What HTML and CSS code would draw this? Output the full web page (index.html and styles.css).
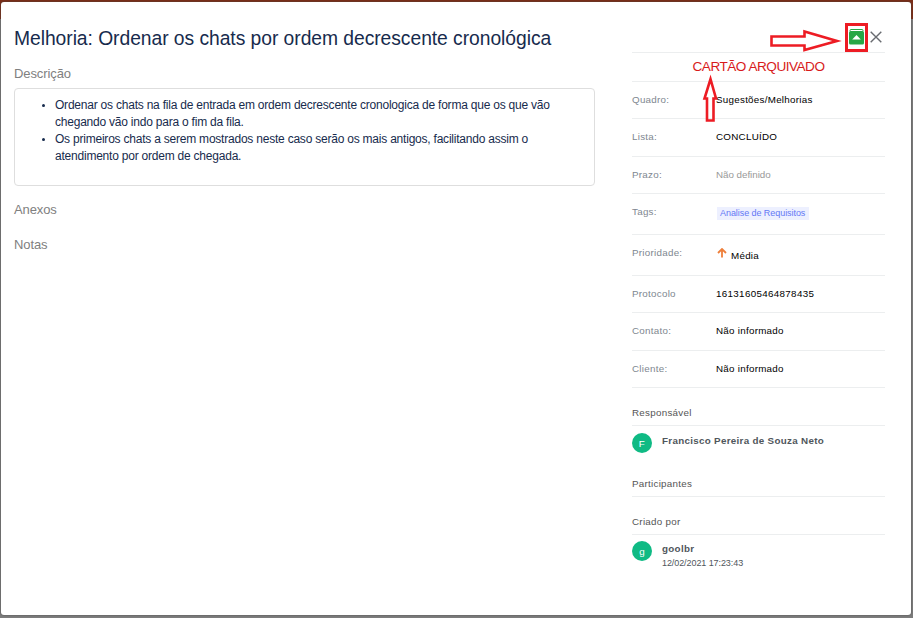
FILE: index.html
```html
<!DOCTYPE html>
<html lang="pt-BR">
<head>
<meta charset="utf-8">
<title>Melhoria</title>
<link rel="stylesheet" href="styles.css">
</head>
<body>
<main class="modal">
  <section class="content">
    <h1 class="title">Melhoria: Ordenar os chats por ordem decrescente cronológica</h1>
    <h2 class="heading">Descrição</h2>
    <div class="description">
      <ul>
        <li>Ordenar os chats na fila de entrada em ordem decrescente cronologica de forma que os que vão<br>chegando vão indo para o fim da fila.</li>
        <li>Os primeiros chats a serem mostrados neste caso serão os mais antigos, facilitando assim o<br>atendimento por ordem de chegada.</li>
      </ul>
    </div>
    <h2 class="heading attachments">Anexos</h2>
    <h2 class="heading notes">Notas</h2>
  </section>
  <aside class="sidebar">
    <div class="actions">
      <svg class="archive" width="15" height="16" viewBox="0 0 15 16"><path d="M1 2V1.500Q1 .5 2 .5H13Q14 .5 14 1.500V2" fill="none" stroke="#28a745"/><rect y="2" width="15" height="13.500" rx="1.5" fill="#28a745"/><path d="M7.500 6L11.800 10.500H3.200z" fill="#fff"/></svg>
      <svg class="close" width="12" height="12" viewBox="0 0 12 12"><path d="M.7.7l10.6 10.6M11.3.7L.7 11.3" stroke="#686b70" stroke-width="1.4"/></svg>
    </div>
    <div class="archived"><span>CARTÃO ARQUIVADO</span></div>
    <dl class="fields">
      <div class="row r37"><dt>Quadro:</dt><dd>Sugestões/Melhorias</dd></div>
      <div class="row r38"><dt>Lista:</dt><dd>CONCLUÍDO</dd></div>
      <div class="row r37"><dt>Prazo:</dt><dd class="muted">Não definido</dd></div>
      <div class="row r41"><dt>Tags:</dt><dd><span class="tag">Analise de Requisitos</span></dd></div>
      <div class="row r41"><dt>Prioridade:</dt><dd class="priority"><svg width="10" height="10" viewBox="0 0 10 10"><path d="M5 9.500V1.500M1 5l4-4 4 4" fill="none" stroke="#ee7f3b" stroke-width="1.8"/></svg><span>Média</span></dd></div>
      <div class="row r37"><dt>Protocolo</dt><dd class="protocol">16131605464878435</dd></div>
      <div class="row r38"><dt>Contato:</dt><dd>Não informado</dd></div>
      <div class="row r37"><dt>Cliente:</dt><dd>Não informado</dd></div>
    </dl>
    <h3 class="people">Responsável</h3>
    <div class="person owner"><span class="avatar">F</span><div><strong>Francisco Pereira de Souza Neto</strong></div></div>
    <h3 class="people">Participantes</h3>
    <h3 class="people">Criado por</h3>
    <div class="person creator"><span class="avatar">g</span><div><strong>goolbr</strong><time>12/02/2021 17:23:43</time></div></div>
  </aside>
</main>
<svg class="annotations" width="913" height="618" viewBox="0 0 913 618" fill="none" stroke="#ed1c24" stroke-width="3">
  <rect x="846.5" y="24.5" width="20" height="26"/>
  <path d="M771.500 36.500H804.500V31.500L837 41L804.500 50V45.500H771.500Z" stroke-width="2.6"/>
  <path d="M707 120.500V98.500H704.500L710.500 79L716 98.500H713.500V120.500Z" stroke-width="2.6"/>
</svg>
</body>
</html>
```
FILE: styles.css
```css
* { box-sizing: border-box; }
body {
  margin: 0;
  height: 618px;
  padding: 2px 2px 3px 1px;
  overflow: hidden;
  font-family: "Liberation Sans", Arial, sans-serif;
  background: linear-gradient(#7b2d17 0 19px, #7c7c7c 19px);
}
h1, h2, h3, ul, dl, dd { margin: 0; font-weight: 400; }
.modal {
  display: flex;
  height: 613px;
  padding: 0 26px 0 13px;
  border-radius: 3px;
  background: #fff;
  box-shadow: 0 0 2px #444;
}
.content { width: 581px; margin-right: 37px; white-space: nowrap; }
.title { padding-top: 24px; font-size: 19.3px; line-height: 25px; letter-spacing: -.05px; color: #172b4d; }
.heading { margin-top: 15px; font-size: 13px; line-height: 16px; letter-spacing: -.1px; color: #808080; }
.description { height: 98px; margin-top: 6px; padding-top: 8px; border: 1px solid #dedede; border-radius: 4px; }
.description ul { padding-left: 40px; font-size: 12px; line-height: 17px; letter-spacing: -.22px; color: #172b4d; }
.description li::marker { font-size: 10px; }
.attachments { margin-top: 16px; }
.notes { margin-top: 19px; }
.sidebar { width: 253px; font-size: 9.8px; letter-spacing: .27px; white-space: nowrap; }
.actions { display: flex; height: 51px; padding: 27px 3px 0 0; justify-content: flex-end; gap: 6px; border-bottom: 1px solid #eceeef; }
.close { margin-top: 2px; }
.archived { height: 29px; line-height: 27px; text-align: center; font-size: 13.6px; letter-spacing: -.5px; color: #d81b1b; border-bottom: 1px solid #eceeef; }
.row { display: grid; grid-template-columns: 84px 1fr; padding-top: 11px; line-height: 14px; border-bottom: 1px solid #eceeef; }
.r37 { height: 37px; }
.r38 { height: 38px; }
.r41 { height: 41px; }
dt { color: #808790; }
dd { color: #000; }
dd.muted { color: #999; letter-spacing: -.03px; }
.protocol { letter-spacing: .33px; }
.tag { display: block; width: 92px; height: 13px; margin: 2px 0 0 1px; padding-left: 3px; font-size: 9px; line-height: 12px; letter-spacing: -.06px; color: #6478f5; background: #edf0ff; }
.priority { display: flex; gap: 4px; padding-left: 1px; }
.priority svg { margin-top: 2px; }
.priority span { margin-top: 3px; }
.people { height: 38px; padding-top: 18px; line-height: 14px; font-size: 9.8px; color: #555; border-bottom: 1px solid #eceeef; }
.person { display: flex; gap: 10px; color: #50565c; }
.owner { height: 33px; padding-top: 7px; }
.creator { padding-top: 6px; }
.avatar { width: 20px; height: 20px; border-radius: 50%; background: #0fba84; color: #fff; text-align: center; line-height: 21px; }
.person strong { display: block; line-height: 15px; letter-spacing: .31px; }
.person time { display: block; font-size: 9px; line-height: 14px; letter-spacing: -.08px; }
.annotations { position: absolute; top: 0; left: 0; pointer-events: none; }
```
